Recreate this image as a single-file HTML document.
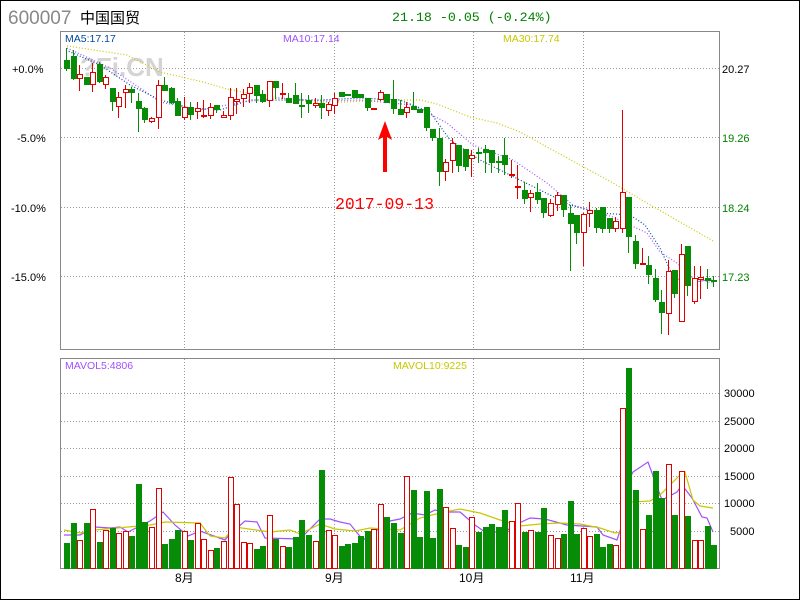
<!DOCTYPE html>
<html><head><meta charset="utf-8">
<style>
html,body{margin:0;padding:0;background:#fff;}
#wrap{position:relative;width:800px;height:600px;overflow:hidden;}
svg text{font-family:"Liberation Sans","Noto Sans CJK SC",sans-serif;}
</style></head>
<body><div id="wrap">
<svg id="s" width="800" height="600" viewBox="0 0 800 600" xmlns="http://www.w3.org/2000/svg" shape-rendering="crispEdges">
<rect x="0.5" y="0.5" width="799" height="599" fill="#fff" stroke="#000"/>
<text x="8" y="24" font-size="19" fill="#888">600007</text>
<text x="80" y="23" font-size="15" fill="#000" style="font-family:'Noto Sans CJK SC',sans-serif">中国国贸</text>
<text x="392" y="21" font-size="13.3" fill="#008000" style="font-family:'Liberation Mono',monospace">21.18 -0.05 (-0.24%)</text>
<g id="grid" stroke="#999" stroke-dasharray="1,2"></g>
<text x="80" y="76" font-size="26" font-weight="bold" fill="#d4d4d4">?Fi.CN</text>
<rect x="60.5" y="31.5" width="659" height="318" fill="none" stroke="#888"/>
<rect x="60.5" y="358.5" width="659" height="210" fill="none" stroke="#888"/>
<g id="ma" fill="none" stroke-width="1.2"></g>
<g id="c"></g>
<g id="v"></g>
<g font-size="10.5" style="font-family:'Liberation Mono',monospace">
<text x="65" y="42" fill="#004a9a">MA5:17.17</text>
<text x="283" y="42" fill="#a050ff">MA10:17.14</text>
<text x="503" y="42" fill="#c8c800">MA30:17.74</text>
<text x="65" y="369" fill="#a050ff">MAVOL5:4806</text>
<text x="393" y="369" fill="#c8c800">MAVOL10:9225</text>
</g>
<g font-size="11" fill="#000">
<text x="12" y="73">+0.0%</text>
<text x="17" y="142">-5.0%</text>
<text x="11" y="212">-10.0%</text>
<text x="11" y="281">-15.0%</text>
<text x="722" y="73">20.27</text>
<text x="722" y="142" fill="#008000">19.26</text>
<text x="722" y="212" fill="#008000">18.24</text>
<text x="722" y="281" fill="#008000">17.23</text>
<text x="724" y="397">30000</text>
<text x="724" y="425">25000</text>
<text x="724" y="452">20000</text>
<text x="724" y="480">15000</text>
<text x="724" y="507">10000</text>
<text x="730" y="535">5000</text>
</g>
<g font-size="12" fill="#000" style="font-family:'Liberation Sans','Noto Sans CJK SC',sans-serif">
<text x="175" y="582">8月</text>
<text x="325" y="582">9月</text>
<text x="459" y="582">10月</text>
<text x="570" y="582">11月</text>
</g>
<text x="335" y="209" font-size="16.5" fill="#ff0000" style="font-family:'Liberation Mono',monospace">2017-09-13</text>
<polygon points="385,121 378,140 383,137 383,172 387,172 387,137 392,140" fill="#ff0000" shape-rendering="auto"/>
</svg>
</div>
<script>
var NS="http://www.w3.org/2000/svg";
function el(p,t,a){var e=document.createElementNS(NS,t);for(var k in a)e.setAttribute(k,a[k]);p.appendChild(e);return e;}
var G="#078c07",R="#e00000";
var grid=document.getElementById('grid');
[184,334,473,583].forEach(function(x){el(grid,'line',{x1:x+.5,y1:32,x2:x+.5,y2:349});el(grid,'line',{x1:x+.5,y1:359,x2:x+.5,y2:568});});
[68,137,207,276].forEach(function(y){el(grid,'line',{x1:61,y1:y+.5,x2:719,y2:y+.5});});
[393,421,448,476,503,531].forEach(function(y){el(grid,'line',{x1:61,y1:y+.5,x2:719,y2:y+.5});});
var z4=[[0,60,85,25,90],[0,48,115,30,118],[1,103,115,75,150],[0,110,132,110,132],[1,95,133,70,152],[0,72,122,65,125],[1,112,131,105,145],[0,145,183,145,210],[1,170,199,155,230],[1,148,155,135,200],[0,147,157,140,185],[0,183,204,160,272],[0,205,236,200,245],[1,234,242,230,245],[1,136,232,120,263],[0,135,150,110,150],[0,143,187,140,190],[0,183,224,175,226],[1,200,232,170,238],[0,202,222,185,238],[1,203,214,185,233],[1,226,228,180,230],[1,200,226,190,233],[0,196,206,196,215],[1,226,230,212,232],[1,170,224,143,237],[1,178,182,145,220],[1,163,175,147,198],[1,142,160,128,185],[0,135,165,135,185],[0,162,182,150,185],[1,124,181,124,198],[0,124,142,124,175],[1,158,160,130,175],[0,175,185,160,185],[0,166,188,130,190],[0,196,197,160,230],[0,180,190,165,215],[1,189,195,175,200],[0,188,200,165,235],[1,193,211,185,225],[1,175,196,160,220],[0,157,169,157,169],[0,162,165,162,165],[0,150,172,150,172],[0,162,170,162,170],[0,175,200,175,210],[1,203,208,203,208]];
var z5=[[1,37,57,30,60],[0,42,65,42,65],[0,57,85,0,100],[0,87,102,60,102],[1,82,97,65,110],[0,78,88,35,88],[0,87,97,87,97],[0,82,140,82,150],[0,147,170,147,180],[0,174,272,145,315],[1,245,272,238,300],[1,189,240,175,275],[0,195,255,195,273],[0,207,258,207,270],[1,226,235,210,288],[0,217,219,205,245],[0,207,215,195,275],[0,210,245,210,275],[0,243,245,228,275],[0,225,252,175,282],[1,283,285,240,290],[1,318,320,255,355],[0,330,353,305,370],[1,340,350,330,392],[0,336,356,308,368],[0,353,395,353,410],[1,370,405,358,408],[1,346,371,336,390],[0,345,387,345,407],[0,399,430,375,570],[0,405,455,405,490],[1,403,455,398,555],[1,390,400,366,437],[0,390,440,385,457],[0,380,443,380,457],[0,415,443,415,457],[1,424,443,412,454],[1,336,443,90,455],[0,350,467,350,515]];
var z6=[[0,183,250,165,265],[1,249,251,205,250],[0,255,281,228,308],[0,294,357,268,362],[0,366,395,330,460],[1,273,400,240,462],[0,270,340,270,352],[1,222,424,192,424],[0,198,314,198,345],[1,295,364,258,368],[1,292,296,258,353],[0,293,300,267,323],[0,300,302,288,318]];
var C=[];
z4.forEach(function(d){C.push([d[0],40+d[1]/3,40+d[2]/3,40+d[3]/3,40+d[4]/3]);});
z5.forEach(function(d){C.push([d[0],80+d[1]/3,80+d[2]/3,80+d[3]/3,80+d[4]/3]);});
z6.forEach(function(d){C.push([d[0],180+d[1]/3,180+d[2]/3,180+d[3]/3,180+d[4]/3]);});
var cg=document.getElementById('c');
C.forEach(function(d,i){
 var x=Math.round(64+6.54*i), col=d[0]?R:G, cx=x+2.5;
 var bt=Math.round(d[1]),bb=Math.round(d[2]);if(bb-bt<1)bb=bt+1;
 el(cg,'line',{x1:cx,y1:Math.round(d[3]),x2:cx,y2:Math.round(d[4])+1,stroke:col,'stroke-width':1});
 if(d[0]){el(cg,'rect',{x:x+.5,y:bt+.5,width:5,height:bb-bt,fill:'#fff',stroke:col});}
 else{el(cg,'rect',{x:x,y:bt,width:6,height:bb-bt+1,fill:col});}
});
var v1=[[0,608],[0,548],[1,600],[0,548],[1,507],[0,605],[1,570],[0,563],[1,578],[1,573],[0,587],[0,431],[0,545],[1,561],[1,444],[0,611],[0,597],[0,569],[1,573],[0,599],[1,550],[1,597],[1,630],[0,623],[1,603],[1,411],[1,492],[1,606],[1,609],[0,626],[0,618],[1,525],[0,596],[1,618],[0,620],[0,590],[0,540],[0,585],[1,603],[0,389],[1,570],[1,585],[0,617],[0,611],[0,608],[0,588],[0,573],[1,568],[1,492],[0,531],[0,548],[0,578]];
var v2=[[1,363],[0,404],[0,545],[0,407],[0,548],[0,401],[1,456],[1,519],[0,569],[0,575],[1,486],[0,530],[0,515],[0,508],[0,515],[0,464],[1,498],[1,444],[0,530],[1,525],[0,530],[0,458],[1,540],[1,548],[0,536],[0,437],[0,536],[1,518],[1,543],[0,536],[0,575],[0,566],[1,570],[1,159],[0,38],[0,404],[1,522],[0,479],[0,348],[0,430],[1,327],[0,479],[1,349],[0,482],[1,555],[1,555],[0,512],[0,569]];
var V=[];v1.forEach(function(d){V.push([d[0],340+d[1]/3]);});v2.forEach(function(d){V.push([d[0],355+d[1]/3]);});
var vg=document.getElementById('v');
V.forEach(function(d,i){
 var x=Math.round(64+6.54*i),t=Math.round(d[1]);
 if(d[0])el(vg,'rect',{x:x+.5,y:t+.5,width:5,height:568-t,fill:'#fff',stroke:R});
 else el(vg,'rect',{x:x,y:t,width:6,height:569-t,fill:G});
});
var ma=document.getElementById('ma');
function pl(pts,col,dash){var a={points:pts.map(function(p){return p.join(',')}).join(' '),stroke:col,'shape-rendering':'auto'};if(dash)a['stroke-dasharray']=dash;el(ma,'polyline',a);}
pl([[67,46],[127,55],[160,72],[203,82],[227,89],[247,93],[280,98],[313,102],[347,102],[380,100],[420,100],[437,104],[470,117],[497,123],[520,132],[547,147],[580,165],[613,183],[647,203],[680,222],[713,241]],'#c8c800','1,2');
pl([[67,48],[110,68],[143,90],[160,102],[200,110],[243,102],[277,98],[327,101],[360,100],[413,105],[447,123],[473,145],[513,160],[547,183],[573,205],[613,217],[647,233],[660,252],[677,263],[693,278],[713,283]],'#a050ff','1,2');
pl([[66,50],[100,65],[130,85],[160,100],[190,108],[220,110],[250,100],[280,100],[320,100],[360,98],[400,100],[430,112],[450,140],[480,160],[510,175],[540,190],[570,205],[600,213],[630,215],[645,225],[660,248],[670,270],[680,280],[690,283],[713,279]],'#004a9a','1,2');
pl([[64,535],[80,535],[95,527],[110,528],[120,527],[128,532],[150,521],[163,512],[175,525],[188,536],[200,531],[225,540],[230,534],[245,521],[257,522],[265,538],[300,539],[320,519],[330,519],[340,522],[350,524],[363,540],[390,521],[400,519],[412,513],[425,515],[435,510],[445,512],[460,512],[475,525],[485,532],[505,532],[515,525],[530,518],[545,519],[567,525],[597,527],[603,535],[617,540],[622,525],[628,482],[633,472],[648,462],[662,500],[677,492],[682,485],[692,498],[702,517],[707,518],[713,532]],'#a050ff');
pl([[64,530],[80,533],[95,530],[150,525],[165,522],[200,523],[210,536],[225,538],[235,527],[270,532],[290,530],[300,534],[320,524],[335,529],[355,531],[370,528],[400,530],[420,518],[440,513],[460,509],[480,513],[500,520],[520,526],[540,524],[560,523],[580,524],[600,528],[615,533],[622,532],[632,502],[650,501],[660,495],[670,485],[680,475],[685,472],[693,500],[700,506],[713,508]],'#c8c800');
</script>
</body></html>
